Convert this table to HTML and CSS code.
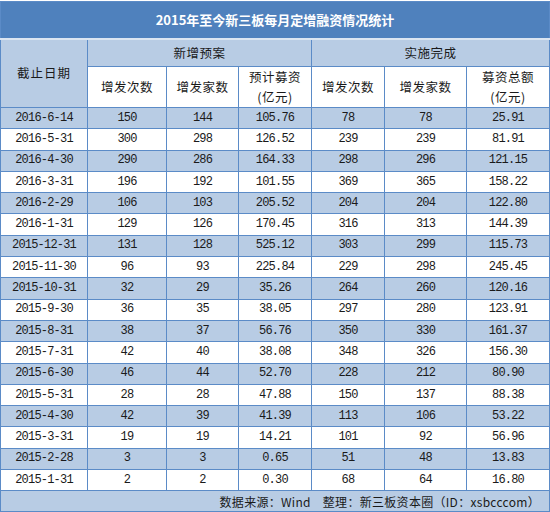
FILE: index.html
```html
<!DOCTYPE html>
<html lang="zh-CN">
<head>
    <meta charset="UTF-8">
    <title>2015年至今新三板每月定增融资情况统计</title>
    <link rel="stylesheet" href="styles.css">
</head>
<body>
    <table class="stat_table">
        <colgroup>
            <col class="c_date">
            <col class="c_num1">
            <col class="c_num2">
            <col class="c_num3">
            <col class="c_num3">
            <col class="c_num4">
            <col class="c_num5">
        </colgroup>
        <tr class="title_row">
            <td colspan="7">2015年至今新三板每月定增融资情况统计</td>
        </tr>
        <tr class="head_row1">
            <td rowspan="2" class="col_date">截止日期</td>
            <td colspan="3">新增预案</td>
            <td colspan="3">实施完成</td>
        </tr>
        <tr class="head_row2">
            <td>增发次数</td>
            <td>增发家数</td>
            <td>预计募资<br>(亿元)</td>
            <td>增发次数</td>
            <td>增发家数</td>
            <td>募资总额<br>(亿元)</td>
        </tr>
        <tr class="blue"><td>2016-6-14</td><td>150</td><td>144</td><td>105.76</td><td>78</td><td>78</td><td>25.91</td></tr>
        <tr><td>2016-5-31</td><td>300</td><td>298</td><td>126.52</td><td>239</td><td>239</td><td>81.91</td></tr>
        <tr class="blue"><td>2016-4-30</td><td>290</td><td>286</td><td>164.33</td><td>298</td><td>296</td><td>121.15</td></tr>
        <tr><td>2016-3-31</td><td>196</td><td>192</td><td>101.55</td><td>369</td><td>365</td><td>158.22</td></tr>
        <tr class="blue"><td>2016-2-29</td><td>106</td><td>103</td><td>205.52</td><td>204</td><td>204</td><td>122.80</td></tr>
        <tr><td>2016-1-31</td><td>129</td><td>126</td><td>170.45</td><td>316</td><td>313</td><td>144.39</td></tr>
        <tr class="blue"><td>2015-12-31</td><td>131</td><td>128</td><td>525.12</td><td>303</td><td>299</td><td>115.73</td></tr>
        <tr><td>2015-11-30</td><td>96</td><td>93</td><td>225.84</td><td>229</td><td>298</td><td>245.45</td></tr>
        <tr class="blue"><td>2015-10-31</td><td>32</td><td>29</td><td>35.26</td><td>264</td><td>260</td><td>120.16</td></tr>
        <tr><td>2015-9-30</td><td>36</td><td>35</td><td>38.05</td><td>297</td><td>280</td><td>123.91</td></tr>
        <tr class="blue"><td>2015-8-31</td><td>38</td><td>37</td><td>56.76</td><td>350</td><td>330</td><td>161.37</td></tr>
        <tr><td>2015-7-31</td><td>42</td><td>40</td><td>38.08</td><td>348</td><td>326</td><td>156.30</td></tr>
        <tr class="blue"><td>2015-6-30</td><td>46</td><td>44</td><td>52.70</td><td>228</td><td>212</td><td>80.90</td></tr>
        <tr><td>2015-5-31</td><td>28</td><td>28</td><td>47.88</td><td>150</td><td>137</td><td>88.38</td></tr>
        <tr class="blue"><td>2015-4-30</td><td>42</td><td>39</td><td>41.39</td><td>113</td><td>106</td><td>53.22</td></tr>
        <tr><td>2015-3-31</td><td>19</td><td>19</td><td>14.21</td><td>101</td><td>92</td><td>56.96</td></tr>
        <tr class="blue"><td>2015-2-28</td><td>3</td><td>3</td><td>0.65</td><td>51</td><td>48</td><td>13.83</td></tr>
        <tr><td>2015-1-31</td><td>2</td><td>2</td><td>0.30</td><td>68</td><td>64</td><td>16.80</td></tr>
        <tr class="foot_row">
            <td colspan="7">数据来源：Wind&nbsp;&nbsp;&nbsp;&nbsp;整理：新三板资本圈（ID：xsbcccom）</td>
        </tr>
    </table>
</body>
</html>
```

FILE: styles.css
```css
*{margin: 0; padding: 0; box-sizing: border-box;}
body{background: #fff; font-family: "Noto Sans CJK SC", sans-serif; color: #1a1a1a;}
.stat_table{width: 549px; border-collapse: collapse; table-layout: fixed; margin-top: 1px;}
.c_date{width: 87px;}
.c_num1{width: 79px;}
.c_num2{width: 72px;}
.c_num3{width: 73px;}
.c_num4{width: 82px;}
.c_num5{width: 83px;}
.stat_table td{border: 1px solid #5b8bc7; text-align: center; height: 21.3px; padding: 0; font-family: "Liberation Mono", "Noto Sans CJK SC", monospace; font-size: 12px; letter-spacing: -0.8px; line-height: 19px;}
.stat_table tr.blue td{background: #b8cce4;}
.title_row td{background: #4f81bd; color: #fff; font-family: "Noto Sans CJK SC", sans-serif; font-weight: bold; font-size: 13px; letter-spacing: 0; height: 37px; border-bottom: 2px solid #dbe5f1;}
.head_row1 td, .head_row2 td{font-family: "Noto Sans CJK SC", sans-serif; font-size: 12.5px; letter-spacing: 0.5px; line-height: 20px;}
.head_row1 td{background: #b8cce4; height: 28px;}
.head_row1 td.col_date{letter-spacing: 1px;}
.head_row2 td{background: #fff; height: 41px;}
.foot_row td{background: #b8cce4; text-align: right; padding-right: 9px; height: 21px; font-family: "Noto Sans CJK SC", sans-serif; font-size: 12px; letter-spacing: 0.3px;}
```
